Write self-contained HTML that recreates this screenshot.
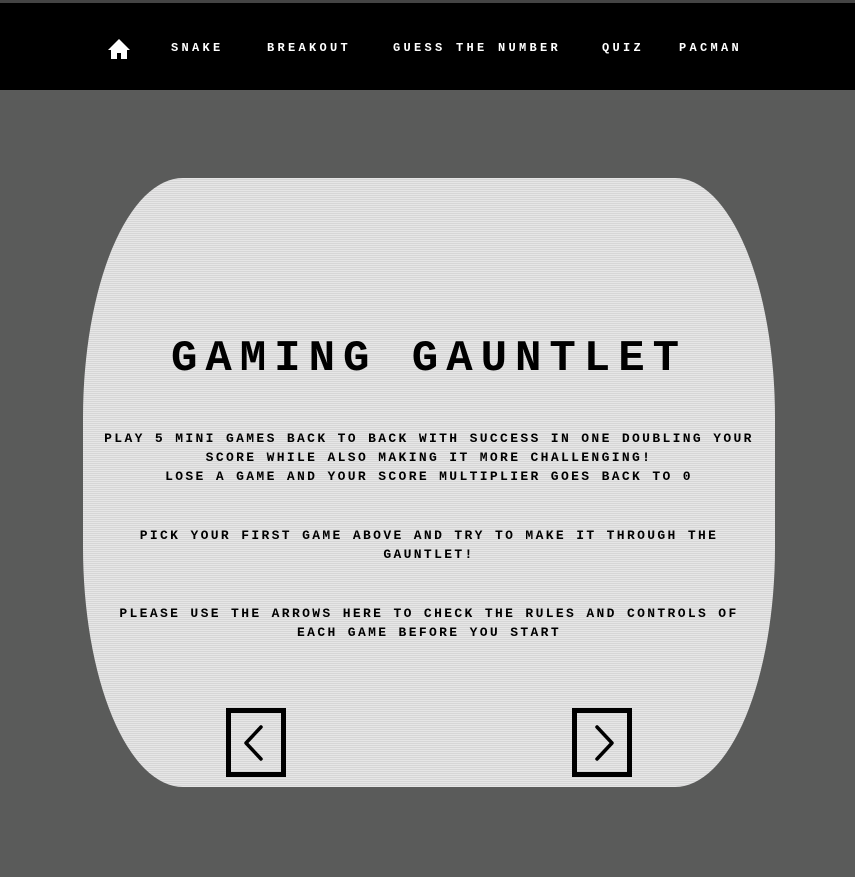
<!DOCTYPE html>
<html><head><style>
html,body{margin:0;padding:0}
body{width:855px;height:877px;background:#5a5b5a;position:relative;overflow:hidden;font-family:"Liberation Mono",monospace;font-weight:bold;text-transform:uppercase}
.topline{position:absolute;left:0;top:0;width:855px;height:3px;background:#444}
nav{position:absolute;left:0;top:3px;width:855px;height:87px;background:#000}
nav span{position:absolute;top:37px;color:#fff;font-size:12px;letter-spacing:3.3px;line-height:16px}
.card{position:absolute;left:83px;top:178px;width:692px;height:609px;background:#e1e1e1;border-radius:100px/240px;
background-image:repeating-linear-gradient(180deg,#e6e6e6 0 1px,#d6d6d6 1px 2px)}
h1{position:absolute;left:0;width:692px;top:334px;margin:0;text-align:center;font-size:44px;letter-spacing:8px;line-height:50px;color:#000}
p{position:absolute;left:0;width:692px;margin:0;text-align:center;font-size:13px;letter-spacing:2.35px;line-height:19px;color:#000}
.btn{position:absolute;top:708px;width:50px;height:59px;border:5px solid #000}
</style></head><body>
<div class="topline"></div>
<nav>
<svg style="position:absolute;left:107px;top:35px" width="24" height="22" viewBox="0 0 24 22"><path d="M12 1L1 12h3v9h6v-6h4v6h6v-9h3z" fill="#fff"/></svg>
<span style="left:171px">Snake</span>
<span style="left:267px">Breakout</span>
<span style="left:393px">Guess the number</span>
<span style="left:602px">Quiz</span>
<span style="left:679px">Pacman</span>
</nav>
<div class="card"></div>
<h1 style="left:83px">Gaming Gauntlet</h1>
<p style="left:83px;top:429px">Play 5 mini games back to back with success in one doubling your<br>score while also making it more challenging!<br>Lose a game and your score multiplier goes back to 0</p>
<p style="left:123px;width:612px;top:526px">Pick your first game above and try to make it through the gauntlet!</p>
<p style="left:113px;width:632px;top:604px">Please use the arrows here to check the rules and controls of each game before you start</p>
<div class="btn" style="left:226px"><svg width="50" height="59" viewBox="0 0 50 59"><path d="M30 14L15 30l15 16" stroke="#000" stroke-width="3.5" fill="none" stroke-linecap="round" stroke-linejoin="round"/></svg></div>
<div class="btn" style="left:572px"><svg width="50" height="59" viewBox="0 0 50 59"><path d="M20 14l15 16-15 16" stroke="#000" stroke-width="3.5" fill="none" stroke-linecap="round" stroke-linejoin="round"/></svg></div>
</body></html>
